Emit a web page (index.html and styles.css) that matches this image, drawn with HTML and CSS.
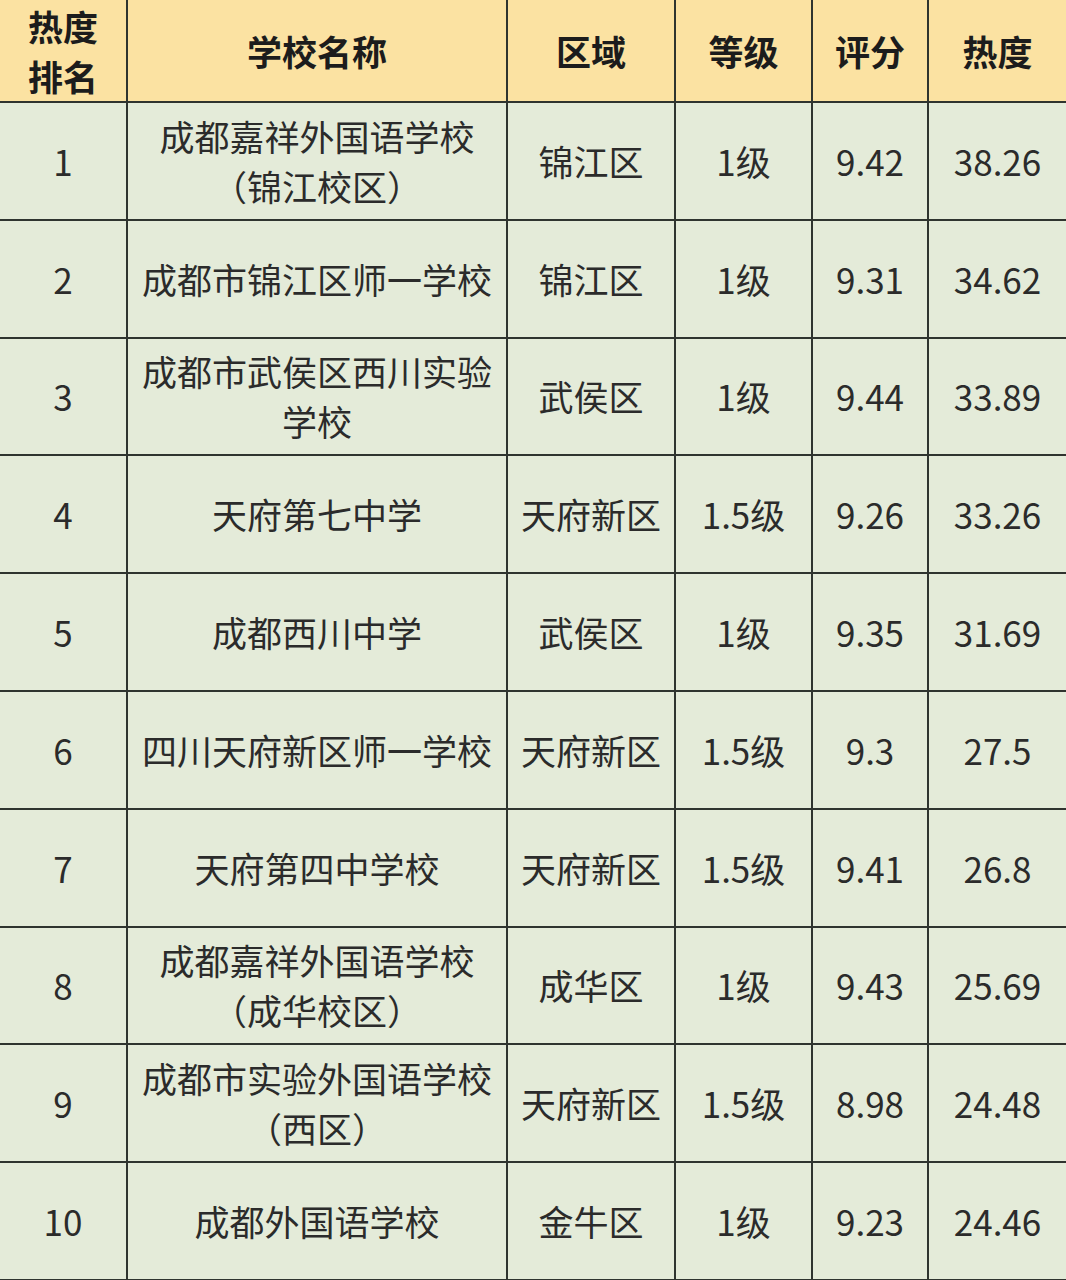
FILE: index.html
```html
<!DOCTYPE html>
<html lang="zh-CN">
<head>
<meta charset="utf-8">
<title>热度排名</title>
<link rel="stylesheet" href="styles.css">
</head>
<body>
<table class="rank">
  <colgroup>
    <col class="c-rank"><col class="c-name"><col class="c-area"><col class="c-level"><col class="c-score"><col class="c-heat">
  </colgroup>
  <thead>
    <tr class="head">
      <th>热度<br>排名</th><th>学校名称</th><th>区域</th><th>等级</th><th>评分</th><th>热度</th>
    </tr>
  </thead>
  <tbody>
    <tr><td>1</td><td>成都嘉祥外国语学校<br>（锦江校区）</td><td>锦江区</td><td>1级</td><td>9.42</td><td>38.26</td></tr>
    <tr><td>2</td><td>成都市锦江区师一学校</td><td>锦江区</td><td>1级</td><td>9.31</td><td>34.62</td></tr>
    <tr><td>3</td><td>成都市武侯区西川实验<br>学校</td><td>武侯区</td><td>1级</td><td>9.44</td><td>33.89</td></tr>
    <tr><td>4</td><td>天府第七中学</td><td>天府新区</td><td>1.5级</td><td>9.26</td><td>33.26</td></tr>
    <tr><td>5</td><td>成都西川中学</td><td>武侯区</td><td>1级</td><td>9.35</td><td>31.69</td></tr>
    <tr><td>6</td><td>四川天府新区师一学校</td><td>天府新区</td><td>1.5级</td><td>9.3</td><td>27.5</td></tr>
    <tr><td>7</td><td>天府第四中学校</td><td>天府新区</td><td>1.5级</td><td>9.41</td><td>26.8</td></tr>
    <tr><td>8</td><td>成都嘉祥外国语学校<br>（成华校区）</td><td>成华区</td><td>1级</td><td>9.43</td><td>25.69</td></tr>
    <tr><td>9</td><td>成都市实验外国语学校<br>（西区）</td><td>天府新区</td><td>1.5级</td><td>8.98</td><td>24.48</td></tr>
    <tr><td>10</td><td>成都外国语学校</td><td>金牛区</td><td>1级</td><td>9.23</td><td>24.46</td></tr>
  </tbody>
</table>
</body>
</html>
```
FILE: styles.css
```css
html, body {
  margin: 0;
  padding: 0;
  background: #e4ebd9;
}
.rank {
  width: 1066px;
  border-collapse: collapse;
  border: none;
  table-layout: fixed;
  font-family: "Noto Sans CJK SC", "Noto Sans", sans-serif;
  font-size: 35px;
  line-height: 50px;
  color: #2b2b2b;
}
.c-rank { width: 127px; }
.c-name { width: 380px; }
.c-level { width: 137px; }
.c-area { width: 168px; }
.c-score { width: 116px; }
.c-heat { width: 138px; }
.rank th, .rank td {
  border: 2px solid #2f342f;
  text-align: center;
  vertical-align: middle;
  padding: 0;
  white-space: nowrap;
}
.rank th {
  background: #fbe2a2;
  font-weight: 700;
  color: #1c1c1c;
  height: 101px;
  border-top: none;
}
.rank td {
  background: #e4ebd9;
  height: 115.8px;
}
.rank th:first-child, .rank td:first-child { border-left: none; }
.rank th:last-child, .rank td:last-child { border-right: none; }
```
